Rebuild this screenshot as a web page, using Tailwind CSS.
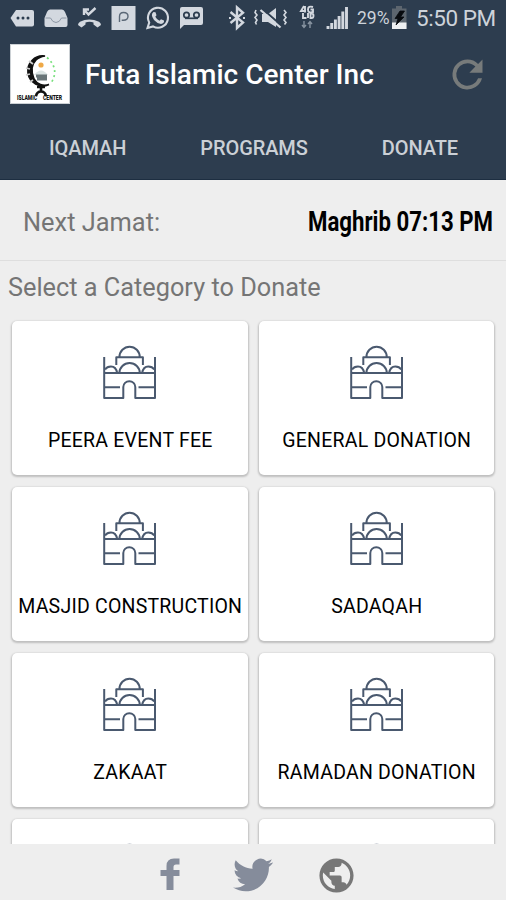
<!DOCTYPE html>
<html lang="en">
<head>
<meta charset="utf-8">
<title>Futa Islamic Center Inc</title>
<script src="https://cdn.jsdelivr.net/npm/@tailwindcss/browser@4"></script>
</head>
<body class="bg-[#eeeeee] font-['Roboto',sans-serif]">
<svg class="hidden">
  <symbol id="mosque" viewBox="0 0 56 56">
    <g fill="none" stroke="#4a596f" stroke-width="2" stroke-linejoin="round">
      <path d="M2.2 12V53H21.300V42a6 5.800 0 0 1 12 0V53H53V12M2.2 28H53M2.2 42.300H18M36.500 42.300H53"/>
      <path d="M14.300 20V12.300H40.900V20M17.400 12.300a10.200 10.600 0 0 1 20.400 0M17.400 28a10.200 10 0 0 1 20.400 0M3 24.500Q5 21.500 9 21.500Q14 21.500 15.200 28M52.300 24.500Q50.300 21.500 46.300 21.500Q41.300 21.500 40.100 28"/>
    </g>
  </symbol>
</svg>
<div class="w-[506px] h-[900px] flex flex-col overflow-hidden">
  <header class="h-[180px] shrink-0 bg-[#2d3d4f] border-b border-[#1d2e41]">
    <div class="h-9 flex items-center text-[#cdd3da]">
      <svg class="w-[210px] h-9 shrink-0" viewBox="0 0 210 36" fill="#d3d8df">
        <path d="M16 10H32q2 0 2 2V24.500q0 2-2 2H16L10.500 18Z"/>
        <g fill="#2d3d4f"><circle cx="18" cy="18" r="1.500"/><circle cx="23" cy="18" r="1.500"/><circle cx="28" cy="18" r="1.500"/></g>
        <path d="M50 9.500H62Q64 9.500 65 12L67.500 18V25q0 2-2 2H46.500q-2 0-2-2V18L47 12q1-2.500 3-2.500Z"/>
        <path d="M45.500 18H50.500q2 4.500 5.500 4.500T61.500 18H66.500" fill="none" stroke="#8e98a5" stroke-width="1"/>
        <path d="M78 25q0-2 2-3.200Q89 17 99 21.800q2 1.200 2 3.200L97.500 27.500L93.500 24.500V22.500Q89.500 21 85.500 22.500V24.500L81.500 27.500Z"/>
        <path d="M95.500 8L88.500 14.500L84.500 10.200M84 15V9.500H89" fill="none" stroke="#d3d8df" stroke-width="2.400"/>
        <path d="M111.500 6H135.500V30H111.500Z"/>
        <path d="M119.500 22V16.500q0-4 4-4q4.500 0 4.500 3.800q0 4-4.800 4h-1.500" fill="none" stroke="#5b6877" stroke-width="1.400"/>
        <path d="M147.500 28L149.200 22.500A10 10 0 1 1 153 26.400Z" fill="none" stroke="#d3d8df" stroke-width="2.100"/>
        <path d="M153.500 12l2 .3 1 3-1.200 1.500q1.500 2.800 4.200 4l1.500-1.500 3 1.300q.5 3-3 3.400-4-.4-7-3.900Q150 14.500 153.500 12Z"/>
        <path d="M182 7H201q2 0 2 2V23q0 2-2 2H184L180 29V9q0-2 2-2Z"/>
        <g fill="none" stroke="#2d3d4f" stroke-width="1.700"><circle cx="186.500" cy="15" r="2.700"/><circle cx="196.500" cy="15" r="2.700"/><path d="M185 18.300H198"/></g>
      </svg>
      <svg class="w-[142px] h-9 shrink-0" viewBox="210 0 142 36" fill="none" stroke="#d3d8df">
        <path d="M230.500 12L243 22.500L237 28V7.500L243 12.800L230.500 23" stroke-width="2.400"/>
        <path d="M229 18h2M243 18h2" stroke-width="2.200"/>
        <g stroke-width="1.600"><path d="M256 10l-1 2.500 2 2.500-2 2.500 2 2.500-1.500 2.500 1 2M284 10l2 2.500-2 2.500 2 2.500-2 2.500 2 2.500-1.500 2"/></g>
        <path d="M262 14H268L276 8V27L268 22H262Z" fill="#d3d8df" stroke="none"/>
        <path d="M262 8.500L282 26" stroke="#2d3d4f" stroke-width="2"/><path d="M260.500 10L280.500 27.500" stroke-width="2.200"/>
        <g stroke-width="1.900"><path d="M304 6l-3 5h5M305 6v6.500M313 7q-5-1.500-5 2.500t5 2.500V9.500h-2.500M303 13v5h3.500M308 13v5M310.500 18v-4.500h1q2 0 2 2.300t-2 2.200Z"/></g>
        <path d="M304 21v6M302 25l2 2.500 2-2.500M310 28v-6M308 24l2-2.500 2 2.500" stroke="#8793a0" stroke-width="1.400"/>
        <g stroke-width="2.900"><path d="M328 29v-3M331.700 29v-6M335.400 29v-9.500M339.100 29V16M342.800 29V11.500M346.500 29V7"/></g>
      </svg>
      <span class="w-[39px] pl-[5px] text-[17.5px] whitespace-nowrap">29%</span>
      <svg class="w-[19px] h-9 shrink-0" viewBox="391 0 19 36">
        <path d="M396 6H402V8.500H406.500V29H392V8.500H396Z" fill="#5d666f"/>
        <path d="M392 22.500H406.500V29H392Z" fill="#eef0f2"/>
        <path d="M400 11L395 18.500H398L396 25L404 17H400.500L404.500 11Z" fill="#080b0f" stroke="#080b0f" stroke-width=".8"/>
      </svg>
      <span class="pl-[6px] pt-[2px] text-[22.5px] whitespace-nowrap tracking-[-0.45px]">5:50 PM</span>
    </div>
    <div class="h-[76px] flex items-center px-[10px]">
      <div class="w-[60px] h-[60px] bg-white border border-[#ccd1d5]">
        <svg class="w-[58px] h-[58px]" viewBox="0 0 58 58">
          <path d="M34 11A15 15 0 1 0 38 39.500A12 12 0 0 1 23 34Q18 22 25 15Q28 12 34 11Z" fill="#111" stroke="#111" stroke-width="1.600"/>
          <path d="M18 16l4 3M15 23l4 1M15 30l4-1M19 37l3-2" stroke="#ccc" stroke-width="1.800"/>
          <path d="M36 12.500Q49 24 40 38" fill="none" stroke="#75df7a" stroke-width="1.700" stroke-dasharray="2 3"/>
          <circle cx="30" cy="20" r="2.600" fill="#efa947"/>
          <path d="M23 30Q30 21 37 30" fill="#dbe4e3"/>
          <path d="M25 31H36M26 34H36" stroke="#697578" stroke-width="2.800"/>
          <path d="M30 41V46M25 51Q26 46.500 30 46.500T35 51M26 42H34" stroke="#111" stroke-width="2.600" fill="none"/>
          <text x="6" y="55" font-size="6.600" font-weight="900" textLength="20" lengthAdjust="spacingAndGlyphs" fill="#111">ISLAMIC</text>
          <text x="32" y="55" font-size="6.600" font-weight="900" textLength="19" lengthAdjust="spacingAndGlyphs" fill="#111">CENTER</text>
        </svg>
      </div>
      <h1 class="ml-[15px] pt-[2px] text-[28px] font-medium text-white whitespace-nowrap tracking-[0.04px]">Futa Islamic Center Inc</h1>
      <svg class="ml-auto mr-[6px] w-[45px] h-[45px]" viewBox="0 0 24 24" fill="#777b7b"><path d="M17.650 6.350A7.960 7.960 0 0 0 12 4a8 8 0 1 0 7.730 10h-2.080A6 6 0 1 1 12 6c1.660 0 3.140.690 4.220 1.780L13 11h7V4z"/></svg>
    </div>
    <nav class="h-[67px] flex justify-between items-center pt-[5px] pl-[49px] pr-[48px] text-[20px] font-medium text-[#cbd0d6] tracking-[-0.1px]">
      <span>IQAMAH</span><span>PROGRAMS</span><span>DONATE</span>
    </nav>
  </header>
  <section class="h-[81px] shrink-0 flex items-center justify-between pl-[23px] pr-[13px] pt-[4px] border-b border-[#dedede]">
    <span class="text-[25.400px] text-[#757575]">Next Jamat:</span>
    <span class="text-[27px] font-bold text-black whitespace-nowrap origin-right scale-x-[0.822]">Maghrib 07:13 PM</span>
  </section>
  <main class="h-[583px] shrink-0 overflow-hidden">
    <h2 class="h-[60px] pl-[8px] pt-[8px] text-[25.300px] leading-[38px] text-[#757575]">Select a Category to Donate</h2>
    <div id="cards" class="grid grid-cols-2 gap-x-[11px] gap-y-[12px] pl-[12px] pr-[12px]"></div>
  </main>
  <footer class="h-14 shrink-0 flex items-start pt-[13px]">
    <svg class="ml-[160px] w-[21px] h-[34px]" viewBox="0 0 21 34" fill="#858c9b"><path d="M6.500 33V19H.5V13H6.500V9Q6.500 1.500 14 1.500H19.500V7.500H16Q13.500 7.500 13.500 10V13H19.500V19H13.500V33Z"/></svg>
    <svg class="ml-[52px] mt-[-2px] w-[40px] h-[40px]" viewBox="0 0 24 24" fill="#858c9b"><path d="M23.950 4.570a10 10 0 0 1-2.820.770 4.960 4.960 0 0 0 2.160-2.720c-.950.550-2 .950-3.130 1.180a4.920 4.920 0 0 0-8.380 4.480C7.690 8.090 4.070 6.130 1.640 3.160a4.820 4.820 0 0 0-.670 2.480c0 1.710.870 3.210 2.190 4.100a4.900 4.900 0 0 1-2.230-.620v.060a4.920 4.920 0 0 0 3.950 4.830 5 5 0 0 1-2.210.080 4.940 4.940 0 0 0 4.600 3.420A9.870 9.870 0 0 1 0 19.540a13.990 13.990 0 0 0 7.550 2.210c9.050 0 14-7.500 14-13.980 0-.210 0-.420-.020-.630a9.940 9.940 0 0 0 2.460-2.550z"/></svg>
    <svg class="ml-[43px] mt-[-2px] w-[41px] h-[41px]" viewBox="0 0 24 24" fill="#777"><path d="M12 2C6.480 2 2 6.480 2 12s4.480 10 10 10 10-4.480 10-10S17.520 2 12 2zm-1 17.930c-3.950-.490-7-3.850-7-7.930 0-.620.080-1.210.210-1.790L9 15v1c0 1.100.900 2 2 2v1.930zm6.900-2.540c-.260-.810-1-1.390-1.900-1.390h-1v-3c0-.550-.450-1-1-1H8v-2h2c.550 0 1-.450 1-1V7h2c1.100 0 2-.900 2-2v-.410c2.930 1.190 5 4.060 5 7.410 0 2.080-.800 3.970-2.100 5.390z"/></svg>
  </footer>
</div>
<script>
const names = ["PEERA EVENT FEE","GENERAL DONATION","MASJID CONSTRUCTION","SADAQAH","ZAKAAT","RAMADAN DONATION","",""];
document.getElementById("cards").innerHTML = names.map(n => `<article class="h-[154px] rounded-[5px] bg-white shadow-[0_1px_2px_1px_rgba(0,0,0,0.2)] flex flex-col items-center pt-[24px] pl-[1px]"><svg class="w-[56px] h-[56px] shrink-0"><use href="#mosque"/></svg><span class="mt-[25px] text-[19.5px] leading-[29px] text-black whitespace-nowrap tracking-[0.22px]">${n}</span></article>`).join("");
</script>
</body>
</html>
